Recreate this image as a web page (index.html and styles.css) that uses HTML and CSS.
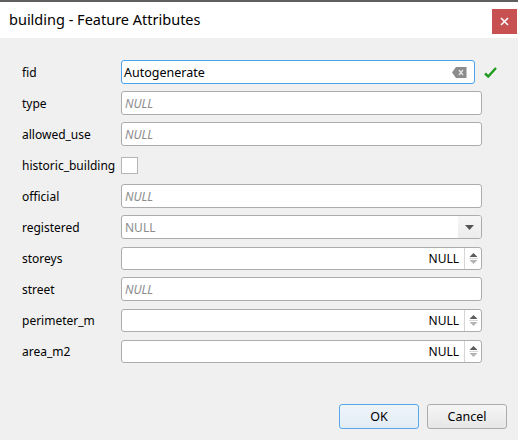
FILE: index.html
```html
<!DOCTYPE html>
<html>
<head>
<meta charset="utf-8">
<link rel="stylesheet" href="styles.css">
</head>
<body>
<div class="window">
  <div class="topstrip"></div>
  <div class="titlebar">
    <span class="title">building - Feature Attributes</span>
    <button class="close" aria-label="Close">
      <svg width="9" height="9" viewBox="0 0 9 9"><path d="M1 1L8 8M8 1L1 8" stroke="#fff" stroke-width="1.6"/></svg>
    </button>
  </div>
  <div class="content">
    <div class="form">
      <label class="lbl">fid</label>
      <div class="field input focus fid">
        <span class="val">Autogenerate</span>
        <svg class="clear" width="15" height="11" viewBox="0 0 15 11"><path d="M4 0H14.5V11H4L0 5.5Z" fill="#8c8c8c"/><path d="M7 3L11 8M11 3L7 8" stroke="#e6e6e6" stroke-width="1.3"/></svg>
      </div>
      <div class="ok-icon"><svg width="13" height="11" viewBox="0 0 13 11"><path d="M1 6.5L4.2 9.5L12 1" fill="none" stroke="#1f9a1f" stroke-width="2.4"/></svg></div>

      <label class="lbl">type</label>
      <div class="field input"><span class="ph">NULL</span></div>

      <label class="lbl">allowed_use</label>
      <div class="field input"><span class="ph">NULL</span></div>

      <label class="lbl">historic_building</label>
      <div class="field chkcell"><span class="checkbox"></span></div>

      <label class="lbl">official</label>
      <div class="field input"><span class="ph">NULL</span></div>

      <label class="lbl">registered</label>
      <div class="field input combo"><span class="cval">NULL</span><span class="drop"><svg width="9" height="5" viewBox="0 0 9 5"><path d="M0 0H9L4.5 5Z" fill="#555"/></svg></span></div>

      <label class="lbl">storeys</label>
      <div class="field input spin"><span class="sval">NULL</span><span class="arrows"><svg width="9" height="13" viewBox="0 0 9 13"><path d="M0.5 5H8.5L4.5 1Z" fill="#5c5c5c"/><path d="M0 6.5H9" stroke="#d8d8d8"/><path d="M0.5 8H8.5L4.5 12Z" fill="#b4b4b4"/></svg></span></div>

      <label class="lbl">street</label>
      <div class="field input"><span class="ph">NULL</span></div>

      <label class="lbl">perimeter_m</label>
      <div class="field input spin"><span class="sval">NULL</span><span class="arrows"><svg width="9" height="13" viewBox="0 0 9 13"><path d="M0.5 5H8.5L4.5 1Z" fill="#5c5c5c"/><path d="M0 6.5H9" stroke="#d8d8d8"/><path d="M0.5 8H8.5L4.5 12Z" fill="#b4b4b4"/></svg></span></div>

      <label class="lbl">area_m2</label>
      <div class="field input spin"><span class="sval">NULL</span><span class="arrows"><svg width="9" height="13" viewBox="0 0 9 13"><path d="M0.5 5H8.5L4.5 1Z" fill="#5c5c5c"/><path d="M0 6.5H9" stroke="#d8d8d8"/><path d="M0.5 8H8.5L4.5 12Z" fill="#b4b4b4"/></svg></span></div>
    </div>
    <div class="footer">
      <button class="btn default">OK</button>
      <button class="btn">Cancel</button>
    </div>
  </div>
</div>
</body>
</html>
```
FILE: styles.css
```css
* { box-sizing: border-box; }
html, body { margin: 0; padding: 0; }
body {
  width: 518px;
  height: 440px;
  overflow: hidden;
  font-family: "Noto Sans", "Open Sans", sans-serif;
  font-size: 12px;
  color: #000;
  background: #f0f0f0;
}
.window {
  display: flex;
  flex-direction: column;
  height: 440px;
}
.topstrip {
  height: 2px;
  background: #5f5f5f;
}
.titlebar {
  height: 36px;
  background: #fff;
  display: flex;
  align-items: center;
  padding-left: 9px;
  padding-right: 1px;
}
.title {
  flex: 1;
  font-size: 14.5px;
  color: #000;
  position: relative;
  top: -1px;
}
.close {
  width: 25px;
  height: 25px;
  border: none;
  padding: 0;
  background: #c75050;
  display: flex;
  align-items: center;
  justify-content: center;
  position: relative;
  top: 1px;
}
.content {
  flex: 1;
  display: flex;
  flex-direction: column;
  background: #f0f0f0;
}
.form {
  flex: 1;
  display: grid;
  grid-template-columns: 99px 361px 36px;
  grid-auto-rows: 24px;
  row-gap: 7px;
  padding: 22px 0 0 22px;
  align-items: center;
}
.lbl {
  grid-column: 1;
  white-space: nowrap;
  color: #000;
}
.field {
  grid-column: 2;
  height: 24px;
}
.input {
  background: #fff;
  border: 1px solid #acacac;
  border-radius: 3px;
  display: flex;
  align-items: center;
  padding-left: 3px;
}
.focus {
  border-color: #4aa3ec;
  padding-left: 2px;
}
.fid {
  margin-right: 7px;
  padding-right: 7px;
}
.val {
  flex: 1;
  font-size: 12.5px;
}
.clear { display: block; }
.ok-icon {
  grid-column: 3;
  display: flex;
  align-items: center;
  padding-left: 2px;
  height: 24px;
}
.ph {
  font-style: italic;
  color: #8c8c8c;
}
.chkcell {
  display: flex;
  align-items: center;
}
.checkbox {
  width: 17px;
  height: 17px;
  background: #fff;
  border: 1px solid #b5b5b5;
}
.combo { padding-right: 0; }
.cval {
  flex: 1;
  color: #8c8c8c;
}
.drop {
  width: 23px;
  height: 22px;
  background: linear-gradient(#f7f7f7, #ececec);
  border-radius: 0 2px 2px 0;
  display: flex;
  align-items: center;
  justify-content: center;
}
.spin {
  padding-right: 0;
  height: 23px;
}
.sval {
  flex: 1;
  text-align: right;
  padding-right: 5px;
  color: #000;
}
.arrows {
  width: 17px;
  height: 21px;
  border-left: 1px solid #d6d6d6;
  display: flex;
  align-items: center;
  justify-content: center;
}
.footer {
  display: flex;
  justify-content: flex-end;
  gap: 8px;
  padding: 0 11px 11px 0;
}
.btn {
  width: 80px;
  height: 25px;
  font-family: inherit;
  font-size: 12.5px;
  color: #000;
  background: linear-gradient(#f6f6f6, #e6e6e6);
  border: 1px solid #acacac;
  border-radius: 3px;
  padding: 0;
}
.btn.default {
  background: linear-gradient(#eef4fa, #e3ecf5);
  border-color: #56a7ec;
}
```
